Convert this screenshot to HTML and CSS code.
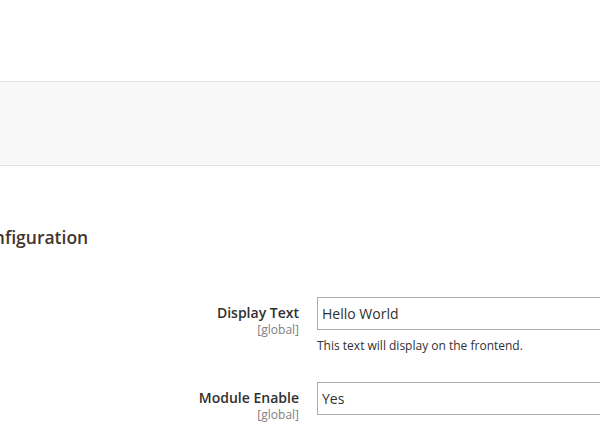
FILE: index.html
```html
<!DOCTYPE html>
<html>
<head>
<meta charset="utf-8">
<link rel="stylesheet" href="styles.css">
</head>
<body>
<div class="page">
  <div class="top"></div>
  <div class="band"></div>
  <section class="fieldset">
    <h2 class="legend">Configuration</h2>
    <div class="row">
      <div class="label">
        <span class="name">Display Text</span>
        <span class="scope">[global]</span>
      </div>
      <div class="control">
        <div class="input">Hello World</div>
        <div class="note">This text will display on the frontend.</div>
      </div>
    </div>
    <div class="row">
      <div class="label">
        <span class="name">Module Enable</span>
        <span class="scope">[global]</span>
      </div>
      <div class="control">
        <div class="input">Yes</div>
      </div>
    </div>
  </section>
</div>
</body>
</html>
```
FILE: styles.css
```css
html, body {
  margin: 0;
  padding: 0;
  background: #fff;
  overflow: hidden;
}
body {
  font-family: "Open Sans", "Liberation Sans", sans-serif;
  color: #303030;
  width: 600px;
  height: 442px;
}
.page {
  display: flex;
  flex-direction: column;
}
.top {
  height: 81px;
}
.band {
  height: 83px;
  background: #f8f8f8;
  border-top: 1px solid #e3e3e3;
  border-bottom: 1px solid #e3e3e3;
}
.fieldset {
  display: flex;
  flex-direction: column;
}
.legend {
  margin: 59px 0 0 -28px;
  font-size: 17.5px;
  font-weight: 600;
  line-height: 24px;
  color: #41362f;
}
.row {
  display: grid;
  grid-template-columns: 299px 400px;
  column-gap: 18px;
  margin-top: 48px;
}
.row + .row {
  margin-top: 28px;
}
.label {
  display: flex;
  flex-direction: column;
  align-items: flex-end;
  padding-top: 7px;
}
.name {
  font-size: 14px;
  font-weight: 600;
  line-height: 18px;
}
.scope {
  font-size: 12px;
  line-height: 16px;
  color: #808080;
}
.control {
  display: flex;
  flex-direction: column;
}
.input {
  height: 31px;
  border: 1px solid #adadad;
  font-size: 14px;
  line-height: 31px;
  padding-left: 4px;
}
.note {
  font-size: 12px;
  line-height: 16px;
  margin-top: 8px;
}
```
